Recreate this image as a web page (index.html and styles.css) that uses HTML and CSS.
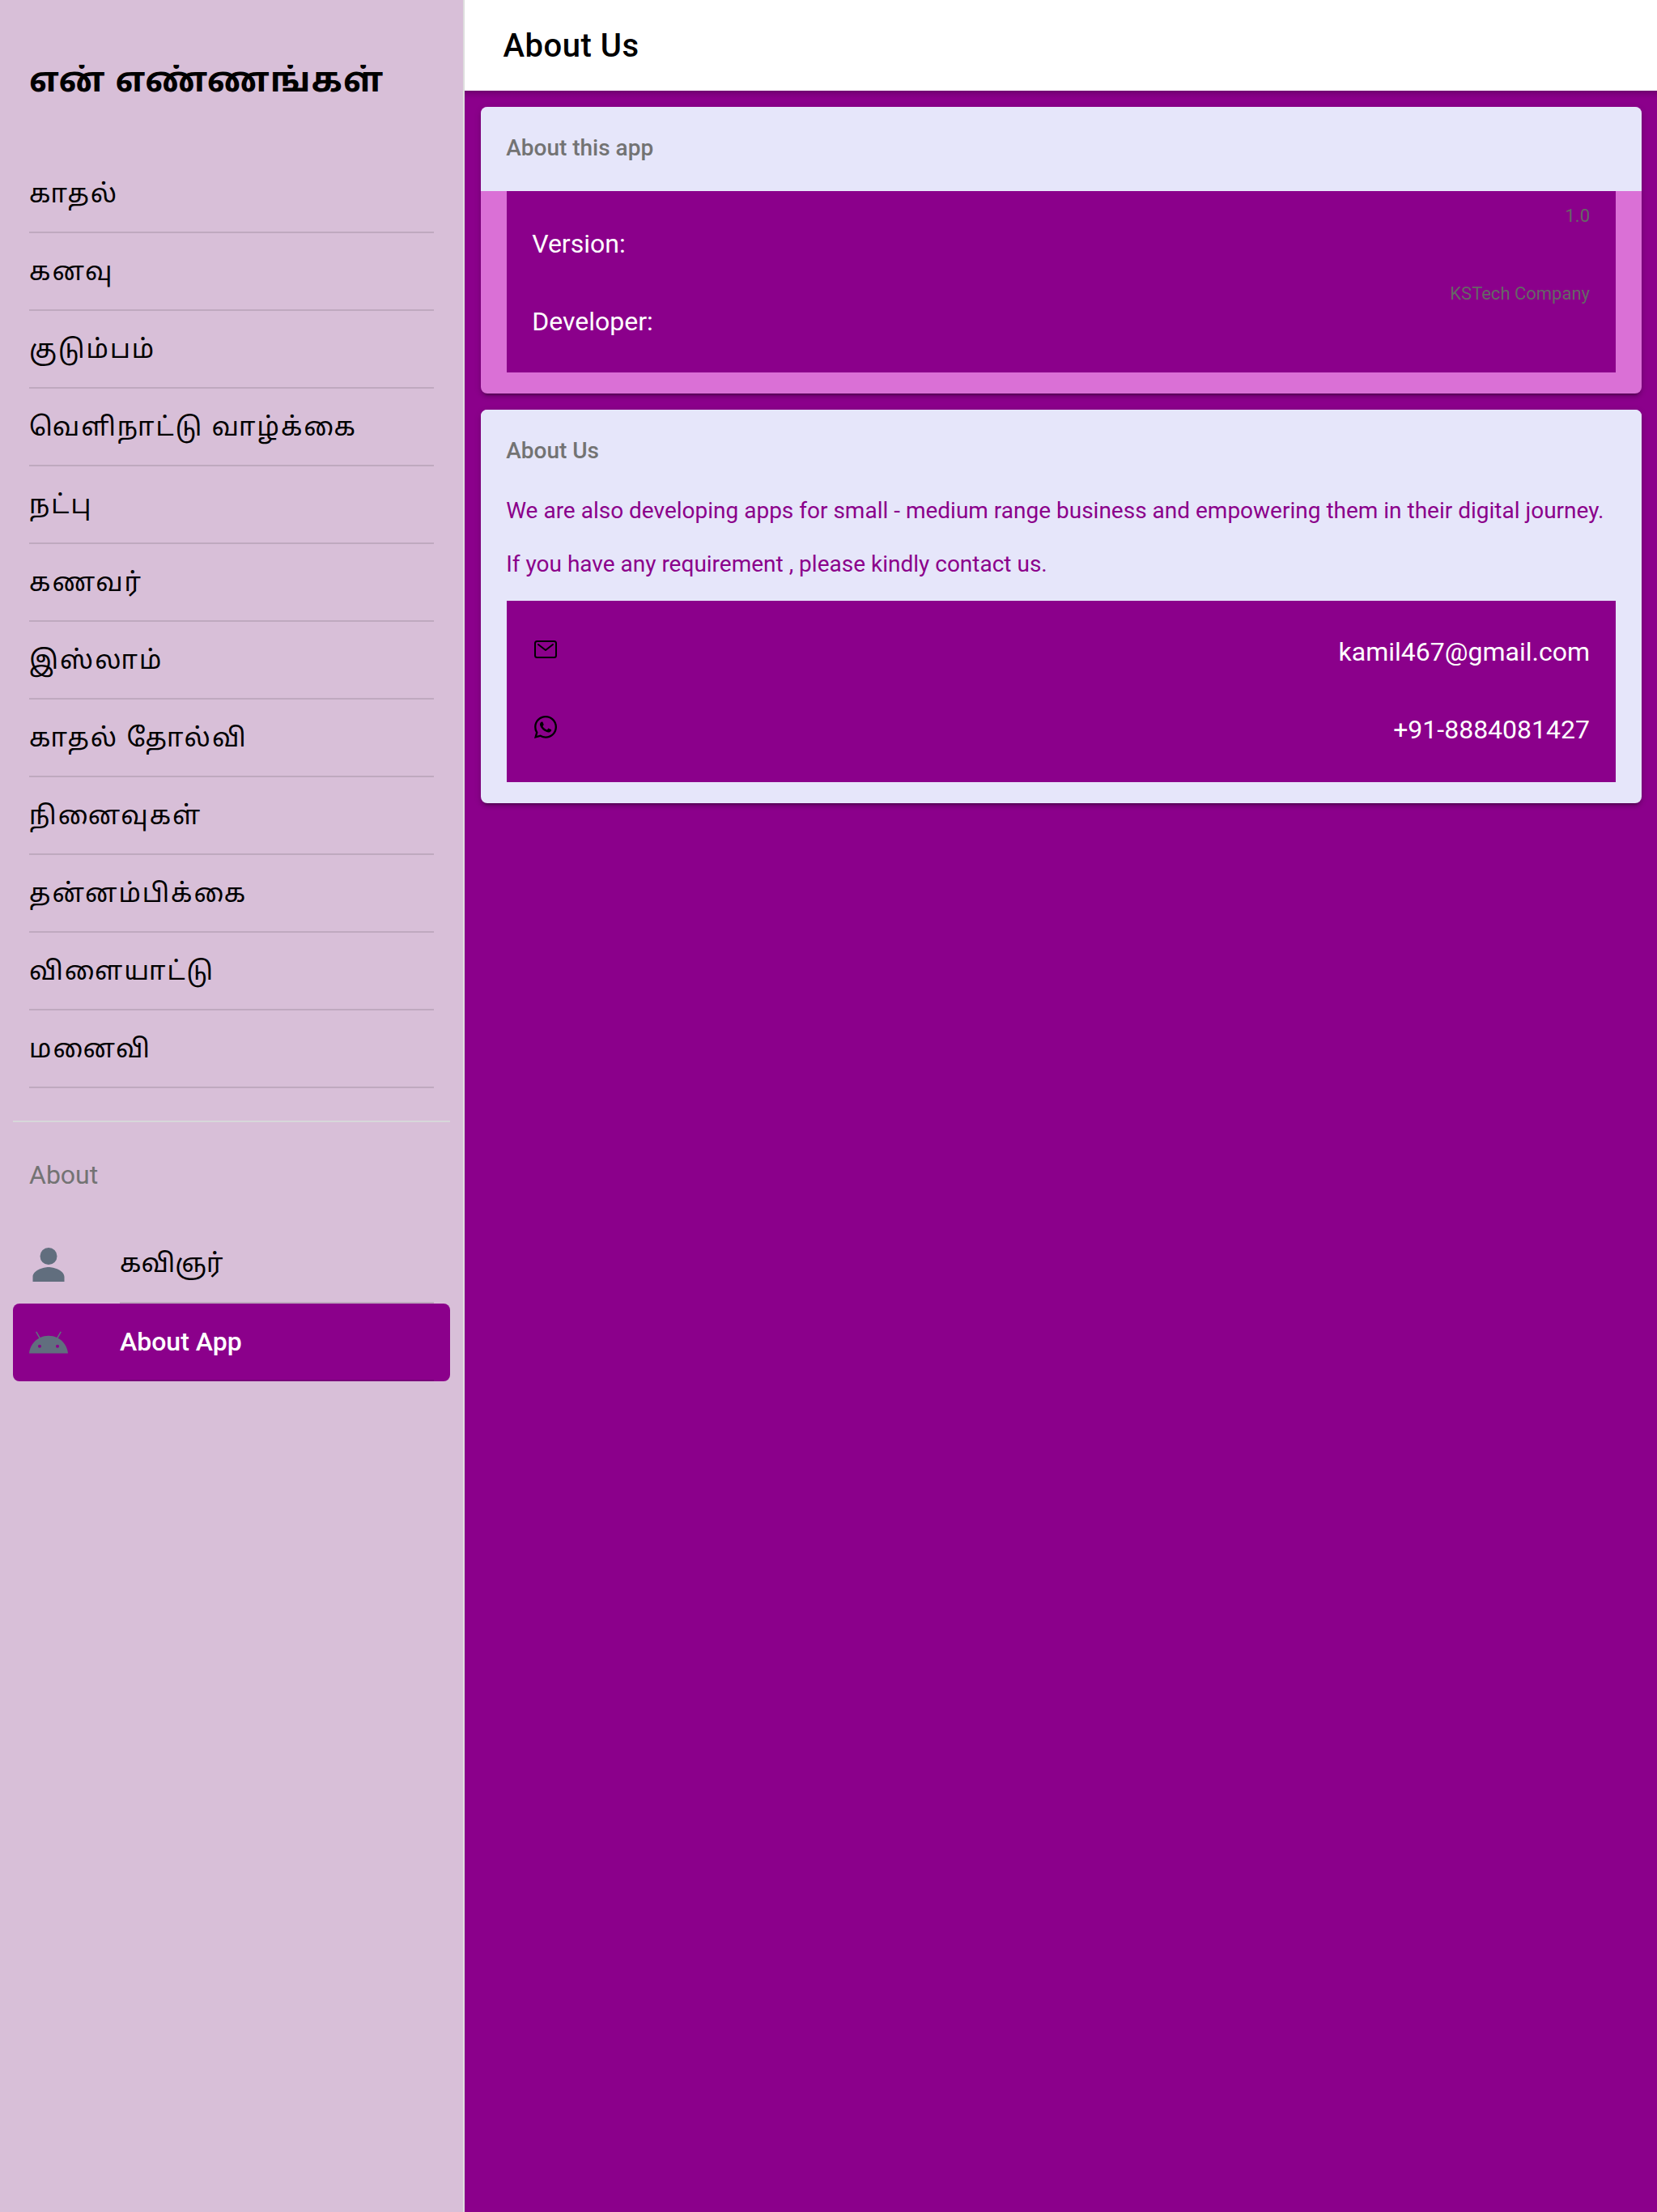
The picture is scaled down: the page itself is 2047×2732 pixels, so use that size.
FILE: index.html
```html
<!DOCTYPE html>
<html lang="ta">
<head>
<meta charset="utf-8">
<title>About Us</title>
<link rel="stylesheet" href="styles.css">
</head>
<body>
<div class="app">
  <aside class="menu">
    <h1 class="menu-title"><span>என் எண்ணங்கள்</span></h1>
    <nav class="menu-list">
      <a class="menu-item"><span>காதல்</span></a>
      <a class="menu-item"><span>கனவு</span></a>
      <a class="menu-item"><span>குடும்பம்</span></a>
      <a class="menu-item"><span>வெளிநாட்டு வாழ்க்கை</span></a>
      <a class="menu-item"><span>நட்பு</span></a>
      <a class="menu-item"><span>கணவர்</span></a>
      <a class="menu-item"><span>இஸ்லாம்</span></a>
      <a class="menu-item"><span>காதல் தோல்வி</span></a>
      <a class="menu-item"><span>நினைவுகள்</span></a>
      <a class="menu-item"><span>தன்னம்பிக்கை</span></a>
      <a class="menu-item"><span>விளையாட்டு</span></a>
      <a class="menu-item"><span>மனைவி</span></a>
    </nav>
    <section class="about">
      <h2 class="about-title">About</h2>
      <a class="about-item">
        <svg class="about-icon" viewBox="0 0 512 512"><path d="M256 256a112 112 0 10-112-112 112 112 0 00112 112zm0 32c-69.42 0-208 42.88-208 128v64h416v-64c0-85.12-138.58-128-208-128z"/></svg>
        <span class="about-label tamil">கவிஞர்</span>
      </a>
      <a class="about-item selected">
        <svg class="about-icon" viewBox="0 0 512 512"><path d="M380.91 199l42.47-73.57a8.63 8.63 0 00-3.12-11.76 8.52 8.52 0 00-11.71 3.12l-43 74.52c-32.83-15-69.78-23.35-109.52-23.35s-76.69 8.36-109.52 23.35l-43-74.52a8.6 8.6 0 10-14.88 8.64L131 199C57.8 238.64 8.19 312.77 0 399.55h512c-8.19-86.78-57.8-160.91-131.09-200.55zM138.45 327.65a21.46 21.46 0 1121.46-21.46 21.47 21.47 0 01-21.46 21.46zm235 0A21.46 21.46 0 11395 306.19a21.47 21.47 0 01-21.51 21.46z"/></svg>
        <span class="about-label">About App</span>
      </a>
    </section>
  </aside>
  <main class="page">
    <header class="toolbar">About Us</header>
    <div class="content">
      <section class="card card-app">
        <h3 class="card-title">About this app</h3>
        <div class="list">
          <div class="row"><span>Version:</span><small class="note">1.0</small></div>
          <div class="row"><span>Developer:</span><small class="note">KSTech Company</small></div>
        </div>
      </section>
      <section class="card">
        <h3 class="card-title">About Us</h3>
        <div class="copy">
          <p>We are also developing apps for small - medium range business and empowering them in their digital journey.</p>
          <p>If you have any requirement , please kindly contact us.</p>
        </div>
        <div class="list">
          <div class="row contact">
            <svg class="contact-icon" viewBox="0 0 512 512" fill="none" stroke="#000" stroke-width="32" stroke-linecap="round" stroke-linejoin="round"><rect x="48" y="96" width="416" height="320" rx="40"/><path d="M112 160l144 112 144-112"/></svg>
            <span>kamil467@gmail.com</span>
          </div>
          <div class="row contact">
            <svg class="contact-icon" viewBox="0 0 512 512"><path fill-rule="evenodd" d="M414.73 97.1A222.14 222.14 0 00256.94 32C134 32 33.92 131.58 33.87 254a220.61 220.61 0 0029.78 111L32 480l118.25-30.87a223.63 223.63 0 00106.6 27h.09c122.93 0 223-99.59 223.06-222A220.18 220.18 0 00414.73 97.1zM256.94 438.66h-.08a185.75 185.75 0 01-94.36-25.72l-6.77-4-70.17 18.32 18.73-68.09-4.41-7A183.46 183.46 0 0171.53 254c0-101.73 83.21-184.5 185.48-184.5a185 185 0 01185.33 184.64c-.04 101.74-83.21 184.52-185.4 184.52zm101.69-138.19c-5.57-2.78-33-16.2-38.08-18.05s-8.83-2.78-12.54 2.78-14.4 18-17.65 21.75-6.5 4.16-12.07 1.38-23.54-8.63-44.83-27.53c-16.57-14.71-27.75-32.87-31-38.42s-.35-8.56 2.44-11.32c2.51-2.49 5.57-6.48 8.36-9.72s3.72-5.56 5.57-9.26.93-6.94-.46-9.71-12.54-30.08-17.18-41.19c-4.53-10.82-9.12-9.35-12.54-9.52-3.25-.16-7-.2-10.69-.2a20.53 20.53 0 00-14.86 6.94c-5.11 5.56-19.51 19-19.51 46.28s20 53.68 22.76 57.38 39.3 59.73 95.21 83.76a323.11 323.11 0 0031.78 11.68c13.35 4.22 25.5 3.63 35.1 2.2 10.71-1.59 33-13.42 37.63-26.38s4.64-24.06 3.25-26.37-5.11-3.71-10.69-6.48z"/></svg>
            <span>+91-8884081427</span>
          </div>
        </div>
      </section>
    </div>
  </main>
</div>
</body>
</html>
```
FILE: styles.css
```css
* { box-sizing: border-box; }
body { margin: 0; font-family: Roboto, sans-serif; color: #000; }
h1, h2, h3, p { margin: 0; font-weight: 400; }

.app { display: flex; width: 2047px; height: 2732px; overflow: hidden; }

/* Side menu */
.menu { width: 574px; flex: none; background: #d8bfd8; border-right: 2px solid #dedede; padding: 0 16px; }
.menu-title { height: 192px; padding: 80px 20px 0; }
.menu-title span { display: block; height: 48px; overflow: hidden; font-family: "Noto Sans Tamil", Roboto, sans-serif; font-size: 42px; font-weight: 700; letter-spacing: 1px; line-height: 46px; white-space: nowrap; }
.menu-list { padding: 0 20px; }
.menu-item { display: flex; align-items: center; height: 96px; padding-top: 5px; border-bottom: 2px solid #bfa9bf; font-family: "Noto Sans Tamil", Roboto, sans-serif; font-size: 32px; letter-spacing: 2px; white-space: nowrap; }
.about { margin-top: 40px; border-top: 2px solid #d7d8da; }
.about-title { height: 128px; padding: 0 20px; color: #737373; font-size: 32px; line-height: 130px; }
.about-item { display: flex; align-items: center; height: 96px; padding: 0 20px; border-radius: 8px; }
.about-icon { width: 48px; height: 48px; margin-right: 64px; fill: #616e7e; }
.about-label { display: flex; align-items: center; flex: 1; height: 96px; border-bottom: 2px solid #bfa9bf; font-size: 32px; }
.about-label.tamil { padding-top: 4px; font-family: "Noto Sans Tamil", Roboto, sans-serif; }
.selected { background: #8b008b; color: #fff; }
.selected .about-label { border-bottom-color: #79007a; font-weight: 500; }

/* Page */
.page { flex: 1; display: flex; flex-direction: column; background: #8b008b; }
.toolbar { height: 112px; padding: 0 47.5px; background: #fff; font-size: 40px; font-weight: 500; letter-spacing: .5px; line-height: 114px; }
.content { flex: 1; display: flex; flex-direction: column; gap: 20px; padding: 20px 19px 20px 20px; background: linear-gradient(rgba(0,0,0,.2), rgba(0,0,0,.07) 5px, transparent 10px); background-size: 100% 10px; background-repeat: no-repeat; }
.card { padding-bottom: 26px; border-radius: 8px; overflow: hidden; background: #e6e6fa; box-shadow: 0 6px 2px -4px rgba(0,0,0,.2), 0 4px 4px rgba(0,0,0,.14), 0 2px 10px rgba(0,0,0,.12); }
.card-app { background: #da70d6; }
.card-title { height: 104px; padding: 0 31.2px; background: #e6e6fa; color: #737373; font-size: 28px; font-weight: 500; line-height: 101px; }
.list { margin: 0 32px; padding: 16px 0; background: #8b008b; color: #fff; font-size: 32px; }
.row { display: flex; align-items: center; justify-content: space-between; height: 96px; padding: 2px 32px 0 31.2px; }
.note { align-self: flex-start; color: #666; font-size: 22px; line-height: 26px; }
.contact { padding: 0 32px 2px; }
.contact-icon { width: 32px; height: 32px; margin-bottom: 6px; }
.copy { height: 132px; padding: 0 31.2px; color: #8b008b; font-size: 28px; }
.copy p { height: 66px; line-height: 42px; white-space: nowrap; }
```
